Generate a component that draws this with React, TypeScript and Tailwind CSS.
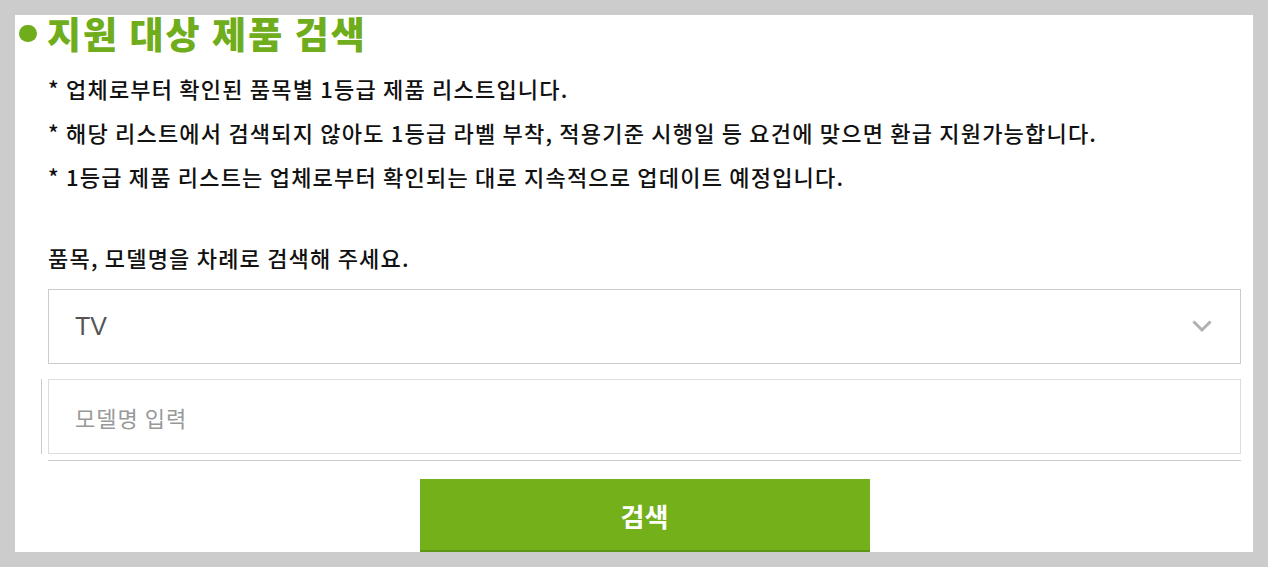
import React, { useState } from 'react';

const KR = "font-['Noto_Sans_CJK_KR','Noto_Sans',sans-serif]";

const notes = [
  '* 업체로부터 확인된 품목별 1등급 제품 리스트입니다.',
  '* 해당 리스트에서 검색되지 않아도 1등급 라벨 부착, 적용기준 시행일 등 요건에 맞으면 환급 지원가능합니다.',
  '* 1등급 제품 리스트는 업체로부터 확인되는 대로 지속적으로 업데이트 예정입니다.',
];

const ChevronDown = () => (
  <svg width="20" height="13" viewBox="0 0 20 13" fill="none">
    <path d="M1.5 1.5 L10 10 L18.5 1.5" stroke="#b0b0b0" strokeWidth="3" />
  </svg>
);

export default function App() {
  const [model, setModel] = useState('');

  return (
    <div className={`min-h-[567px] bg-[#cccccc] px-[15px] pt-[15px] ${KR}`}>
      <div className="bg-white pr-[12px]">
        {/* Title */}
        <div className="flex h-[36px] items-center">
          <span className="ml-[4px] h-[17px] w-[18px] shrink-0 rounded-full bg-[#70ad1c]" />
          <h2 className="ml-[10px] text-[37px] font-black leading-[36px] tracking-[2px] text-[#70ad1c]">
            지원 대상 제품 검색
          </h2>
        </div>

        <div className="pl-[33px]">
          <ul className="mt-[15px] text-[22px] font-medium leading-[44px] tracking-[1.2px] text-[#111]">
            {notes.map((n) => (
              <li key={n}>{n}</li>
            ))}
          </ul>

          <p className="mt-[37px] text-[22px] font-medium leading-[44px] tracking-[1.2px] text-[#111]">
            품목, 모델명을 차례로 검색해 주세요.
          </p>

          {/* Category select */}
          <div className="mt-[10px] flex h-[75px] items-center justify-between border border-[#cccccc] pl-[26px] pr-[28px]">
            <span className="font-['Liberation_Sans',Arial,sans-serif] text-[25px] text-[#555]">TV</span>
            <ChevronDown />
          </div>

          {/* Model input */}
          <div className="-ml-[7px] mt-[15px] border-l border-[#cccccc] pl-[6px]">
            <input
              value={model}
              onChange={(e) => setModel(e.target.value)}
              placeholder="모델명 입력"
              className="block h-[75px] w-full border border-[#dddddd] pl-[26px] text-[22px] tracking-[1px] text-[#333] outline-none placeholder:text-[#999]"
            />
          </div>

          <div className="mt-[6px] h-px bg-[#cccccc]" />

          <div className="mt-[18px] flex justify-center">
            <button className="h-[73px] w-[450px] shrink-0 border-b-2 border-[#5e9516] bg-[#74b01a] pt-[2px] text-[26px] font-bold text-white">
              검색
            </button>
          </div>
        </div>
      </div>
    </div>
  );
}
